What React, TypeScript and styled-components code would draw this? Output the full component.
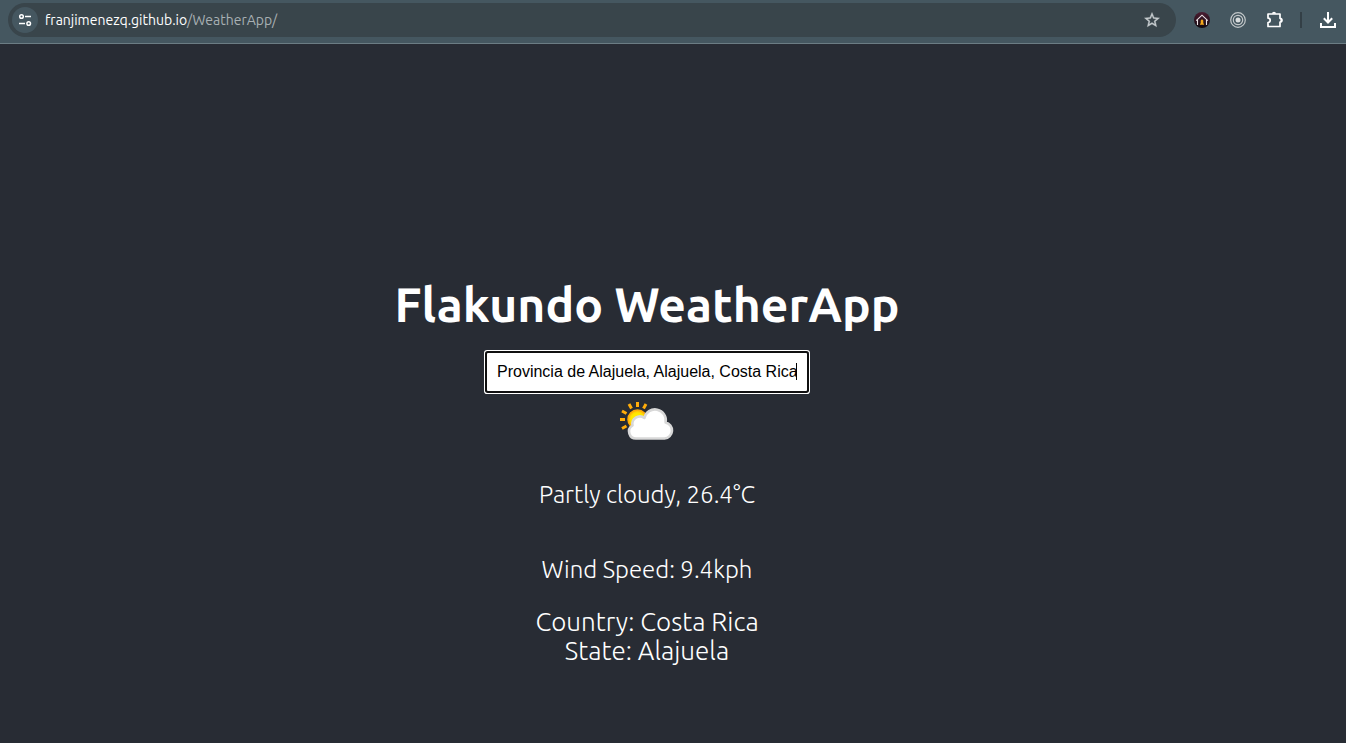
import React, { useState } from 'react';
import styled, { createGlobalStyle } from 'styled-components';

const GlobalStyle = createGlobalStyle`
  * { box-sizing: border-box; }
  body {
    margin: 0;
    background: #282c34;
    font-family: 'Ubuntu', 'Noto Sans', sans-serif;
  }
`;

const Page = styled.div`
  min-height: 100vh;
  display: flex;
  flex-direction: column;
`;

const Toolbar = styled.header`
  display: flex;
  align-items: center;
  height: 44px;
  padding: 0 9px 4px 8px;
  background: #455760;
  border-bottom: 1px solid #6c7d84;
`;

const AddressBar = styled.div`
  flex: 1;
  display: flex;
  align-items: center;
  height: 34px;
  padding: 0 12px 0 4px;
  border-radius: 17px;
  background: #39454b;
`;

const IconButton = styled.button<{ $size?: number; $filled?: boolean }>`
  display: grid;
  place-items: center;
  flex: none;
  width: ${({ $size = 24 }) => $size}px;
  height: ${({ $size = 24 }) => $size}px;
  padding: 0;
  border: 0;
  border-radius: 50%;
  background: ${({ $filled }) => ($filled ? '#455760' : 'transparent')};
  color: #fff;
  svg { display: block; }
`;

const Url = styled.div`
  flex: 1;
  margin-left: 7px;
  font-size: 14px;
  line-height: 20px;
  color: #a8b0b3;
`;

const Host = styled.span`
  color: #fff;
`;

const Extensions = styled.nav`
  display: flex;
  align-items: center;
  gap: 12px;
  margin-left: 14px;
`;

const Divider = styled.span`
  width: 2px;
  height: 16px;
  margin-right: 5px;
  background: #333f46;
`;

const Weather = styled.main`
  flex: 1;
  display: flex;
  flex-direction: column;
  align-items: center;
  padding: 232px 52px 48px 0;
  color: #fff;
  text-align: center;
`;

const Title = styled.h1`
  margin: 0 0 21px;
  font-size: 48px;
  font-weight: 600;
  line-height: 56px;
`;

const Search = styled.form`
  position: relative;
  margin-bottom: 10px;
`;

const SearchInput = styled.input`
  display: block;
  width: 320px;
  height: 38px;
  padding: 0 10px;
  border: 0;
  border-radius: 1px;
  outline: 0;
  background: #fff;
  box-shadow: 0 0 0 2px #101010, 0 0 0 3px #fff;
  color: #000;
  font-family: 'Liberation Sans', Arial, sans-serif;
  font-size: 16px;
`;

const Caret = styled.span`
  position: absolute;
  top: 10px;
  right: 10px;
  width: 1px;
  height: 17px;
  background: #000;
`;

const Condition = styled.p<{ $gap: number }>`
  margin: 0 0 ${({ $gap }) => $gap}px;
  font-size: 24px;
  font-weight: 350;
  line-height: 28px;
`;

const Place = styled.section`
  font-size: 26px;
  font-weight: 300;
  line-height: 29px;
`;

const CloudIcon = styled.svg`
  display: block;
  margin-bottom: 40px;
`;

const TuneIcon = () => (
  <svg width="14" height="14" viewBox="0 0 14 14" fill="none" stroke="#fff" strokeWidth="1.5">
    <circle cx="3.5" cy="3.5" r="1.8" />
    <path d="M7 3.5h6M1 10.5h6" />
    <circle cx="10.7" cy="10.5" r="1.8" />
  </svg>
);

const StarIcon = () => (
  <svg width="18" height="18" viewBox="0 0 24 24" fill="#c6cccf" stroke="#c6cccf" strokeWidth="0.5">
    <path d="M22 9.24l-7.19-.62L12 2 9.19 8.63 2 9.24l5.46 4.73L5.82 21 12 17.27 18.18 21l-1.63-7.03L22 9.24zM12 15.4l-3.76 2.27 1-4.28-3.32-2.88 4.38-.38L12 6.1l1.71 4.04 4.38.38-3.32 2.88 1 4.28L12 15.4z" />
  </svg>
);

const HouseIcon = () => (
  <svg width="16" height="16" viewBox="0 0 16 16">
    <defs>
      <linearGradient id="night" x1="0" y1="0" x2="0" y2="1">
        <stop offset="0" stopColor="#4a1d32" />
        <stop offset="1" stopColor="#120a10" />
      </linearGradient>
    </defs>
    <circle cx="8" cy="8" r="8" fill="url(#night)" />
    <path d="M2.2 8.7L8 3.2l5.8 5.5M3.5 8v5M12.5 8v5" fill="none" stroke="#eee5e8" strokeWidth="1.1" />
    <path d="M8 7.2l1.3 1.2v2.5l.9 1.8H5.8l.9-1.8V8.4z" fill="#f5a81c" />
  </svg>
);

const TargetIcon = () => (
  <svg width="16" height="16" viewBox="0 0 16 16" fill="none" stroke="#c3c8ca" strokeWidth="1.2">
    <circle cx="8" cy="8" r="7.3" />
    <circle cx="8" cy="8" r="4.7" />
    <circle cx="8" cy="8" r="2.5" fill="#d8dcdd" stroke="none" />
  </svg>
);

const PuzzleIcon = () => (
  <svg width="18" height="18" viewBox="0 0 18 18">
    <path
      d="M2 3h12v4.3a1.9 1.9 0 0 1 0 3.8v4.4H2v-4a2.2 2.2 0 0 0 0-4.4z"
      fill="none" stroke="#fff" strokeWidth="1.7" strokeLinejoin="round"
    />
    <path d="M6 2.8a2 2 0 0 1 4 0zM14.4 7.2a2 2 0 0 1 0 4z" fill="#fff" />
  </svg>
);

const DownloadIcon = () => (
  <svg width="18" height="18" viewBox="0 0 18 18" fill="none" stroke="#fff" strokeWidth="2">
    <path d="M9 1v10M4.8 7.3L9 11.5l4.2-4.2M2 12v4h14v-4" />
  </svg>
);

const PartlyCloudy = () => (
  <CloudIcon width="56" height="40" viewBox="0 0 56 40" role="img" aria-label="Partly cloudy">
    <defs>
      <radialGradient id="sun">
        <stop offset="0" stopColor="#fff500" />
        <stop offset="0.7" stopColor="#ffe600" />
        <stop offset="1" stopColor="#ffae0c" />
      </radialGradient>
    </defs>
    <g stroke="#ffac0a" strokeWidth="3">
      <path d="M18.5 1v5M10 3l2.5 4.5M27 3l-2.5 4.5M3 10l4.5 2.5M1 18.5h5M3 27.5l4.5-2.5" />
    </g>
    <circle cx="18.5" cy="18.5" r="9.5" fill="url(#sun)" stroke="#ffac0a" strokeWidth="1.5" />
    <path
      d="M17.5 37.5A7 7 0 0 1 13.5 24.5A7.5 7.5 0 0 1 25.4 17A10.8 10.8 0 0 1 46.6 21.500A8.100 8.100 0 0 1 45.500 37.500z"
      fill="#fff" stroke="#d8d8d8" strokeWidth="2.6" strokeLinejoin="round"
    />
  </CloudIcon>
);

export default function App() {
  const [query, setQuery] = useState('Provincia de Alajuela, Alajuela, Costa Rica');

  return (
    <Page>
      <GlobalStyle />
      <Toolbar>
        <AddressBar>
          <IconButton type="button" $size={26} $filled aria-label="View site information"><TuneIcon /></IconButton>
          <Url><Host>franjimenezq.github.io</Host>/WeatherApp/</Url>
          <IconButton type="button" aria-label="Bookmark this page"><StarIcon /></IconButton>
        </AddressBar>
        <Extensions aria-label="Extensions">
          <IconButton type="button" aria-label="Home extension"><HouseIcon /></IconButton>
          <IconButton type="button" aria-label="Target extension"><TargetIcon /></IconButton>
          <IconButton type="button" $size={26} aria-label="Manage extensions"><PuzzleIcon /></IconButton>
          <Divider />
          <IconButton type="button" $size={18} aria-label="Downloads"><DownloadIcon /></IconButton>
        </Extensions>
      </Toolbar>
      <Weather>
        <Title>Flakundo WeatherApp</Title>
        <Search onSubmit={(e) => e.preventDefault()}>
          <SearchInput aria-label="Location" value={query} onChange={(e) => setQuery(e.target.value)} />
          <Caret />
        </Search>
        <PartlyCloudy />
        <Condition $gap={47}>Partly cloudy, 26.4°C</Condition>
        <Condition $gap={23}>Wind Speed: 9.4kph</Condition>
        <Place>
          <div>Country: Costa Rica</div>
          <div>State: Alajuela</div>
        </Place>
      </Weather>
    </Page>
  );
}
